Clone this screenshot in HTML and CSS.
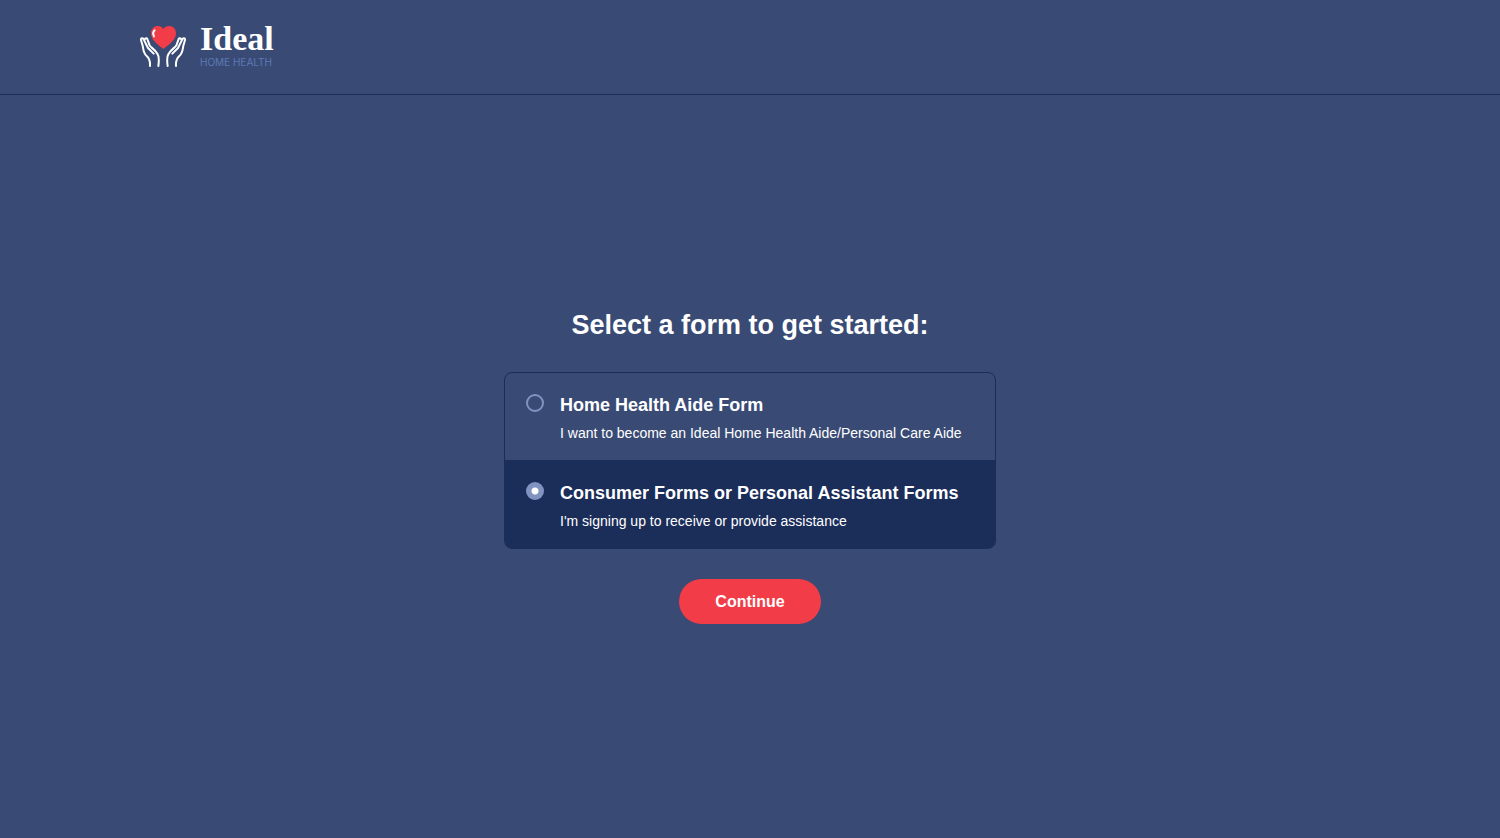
FILE: index.html
```
<!DOCTYPE html>
<html lang="en">
<head>
  <meta charset="UTF-8">
  <meta name="viewport" content="width=device-width, initial-scale=1.0">
  <title>Ideal Home Health</title>
  <link rel="stylesheet" href="styles.css">
</head>
<body>
  <header class="header">
    <a class="logo" href="#">
      <svg class="logo-icon" viewBox="0 0 138 126" aria-hidden="true">
        <path fill="#f23c47" d="M70 72C52 58 33 45 33 25C33 11 43 3 53 3C61 3 67 7 70 12C73 7 80 3 88 3C99 3 108 12 108 25C108 45 88 58 70 72Z"/>
        <path fill="none" stroke="#fff" stroke-width="6" stroke-linecap="round" d="M44 16C39 20 39 28 42 34"/>
        <g id="hand" fill="none" stroke="#fff" stroke-width="6" stroke-linecap="round" stroke-linejoin="round">
          <path d="M30 123C31 108 28 100 20 93C10 85 10 74 8 62L3 45C2 39 9 38 11 43L24 69L41 86"/>
          <path d="M14 44C15 39 20 38 22 42L28 59C30 67 43 71 52 86C59 96 57 108 55 123"/>
        </g>
        <use href="#hand" transform="matrix(-1 0 0 1 138 0)"/>
      </svg>
      <span class="logo-text">
        <span class="logo-name">Ideal</span>
        <span class="logo-sub">HOME HEALTH</span>
      </span>
    </a>
  </header>

  <main class="main">
    <form class="form">
      <h1>Select a form to get started:</h1>

      <div class="options">
        <label class="option">
          <input type="radio" name="form" value="aide">
          <span class="option-text">
            <span class="option-title">Home Health Aide Form</span>
            <span class="option-desc">I want to become an Ideal Home Health Aide/Personal Care Aide</span>
          </span>
        </label>
        <label class="option">
          <input type="radio" name="form" value="consumer" checked>
          <span class="option-text">
            <span class="option-title">Consumer Forms or Personal Assistant Forms</span>
            <span class="option-desc">I'm signing up to receive or provide assistance</span>
          </span>
        </label>
      </div>

      <button type="submit" class="btn">Continue</button>
    </form>
  </main>
</body>
</html>
```
FILE: styles.css
```
* {
  box-sizing: border-box;
}
body {
  display: flex;
  flex-direction: column;
  min-height: 100vh;
  margin: 0;
  font-family: "Liberation Sans", Arial, sans-serif;
  color: #fff;
  background-color: #394b75;
}
.header {
  padding: 23px 140px 25px;
  border-bottom: 1px solid #1b2d59;
}
.logo {
  display: inline-flex;
  align-items: center;
  gap: 14px;
  color: #fff;
  text-decoration: none;
  vertical-align: top;
}
.logo-icon {
  width: 46px;
  height: 42px;
}
.logo-text {
  display: flex;
  flex-direction: column;
}
.logo-name {
  font-family: "Liberation Serif", "Times New Roman", serif;
  font-size: 34px;
  font-weight: bold;
  line-height: 32px;
}
.logo-sub {
  font-family: Inter, sans-serif;
  font-size: 10px;
  line-height: 14px;
  color: #5d78b5;
}
.main {
  flex: 1;
  display: flex;
  align-items: center;
  justify-content: center;
  padding: 20px 20px 22px;
}
.form {
  display: flex;
  flex-direction: column;
  align-items: center;
  width: 100%;
  max-width: 492px;
}
h1 {
  margin: 0 0 30px;
  font-size: 27px;
  line-height: 34px;
  text-align: center;
}
.options {
  width: 100%;
  margin-bottom: 30px;
  border: 1px solid #1b2d59;
  border-radius: 8px;
  overflow: hidden;
}
.option {
  display: flex;
  gap: 16px;
  padding: 20px 21px 17px;
  cursor: pointer;
}
.option + .option {
  border-top: 1px solid #1b2d59;
}
.option:has(input:checked) {
  background-color: #1b2d59;
}
.option input {
  appearance: none;
  flex: none;
  width: 18px;
  height: 18px;
  margin: 1px 0 0;
  border: 2px solid #8193c1;
  border-radius: 50%;
}
.option input:checked {
  border: none;
  background: radial-gradient(circle, #fff 3px, #8193c1 4px);
}
.option-text {
  display: flex;
  flex-direction: column;
  gap: 6px;
}
.option-title {
  font-size: 18px;
  font-weight: bold;
  line-height: 24px;
}
.option-desc {
  font-size: 14px;
  line-height: 20px;
}
.btn {
  padding: 12px 36px;
  border: none;
  border-radius: 23px;
  font-family: inherit;
  font-size: 16px;
  font-weight: bold;
  line-height: 21px;
  color: #fff;
  background-color: #f23c47;
  cursor: pointer;
}
```
